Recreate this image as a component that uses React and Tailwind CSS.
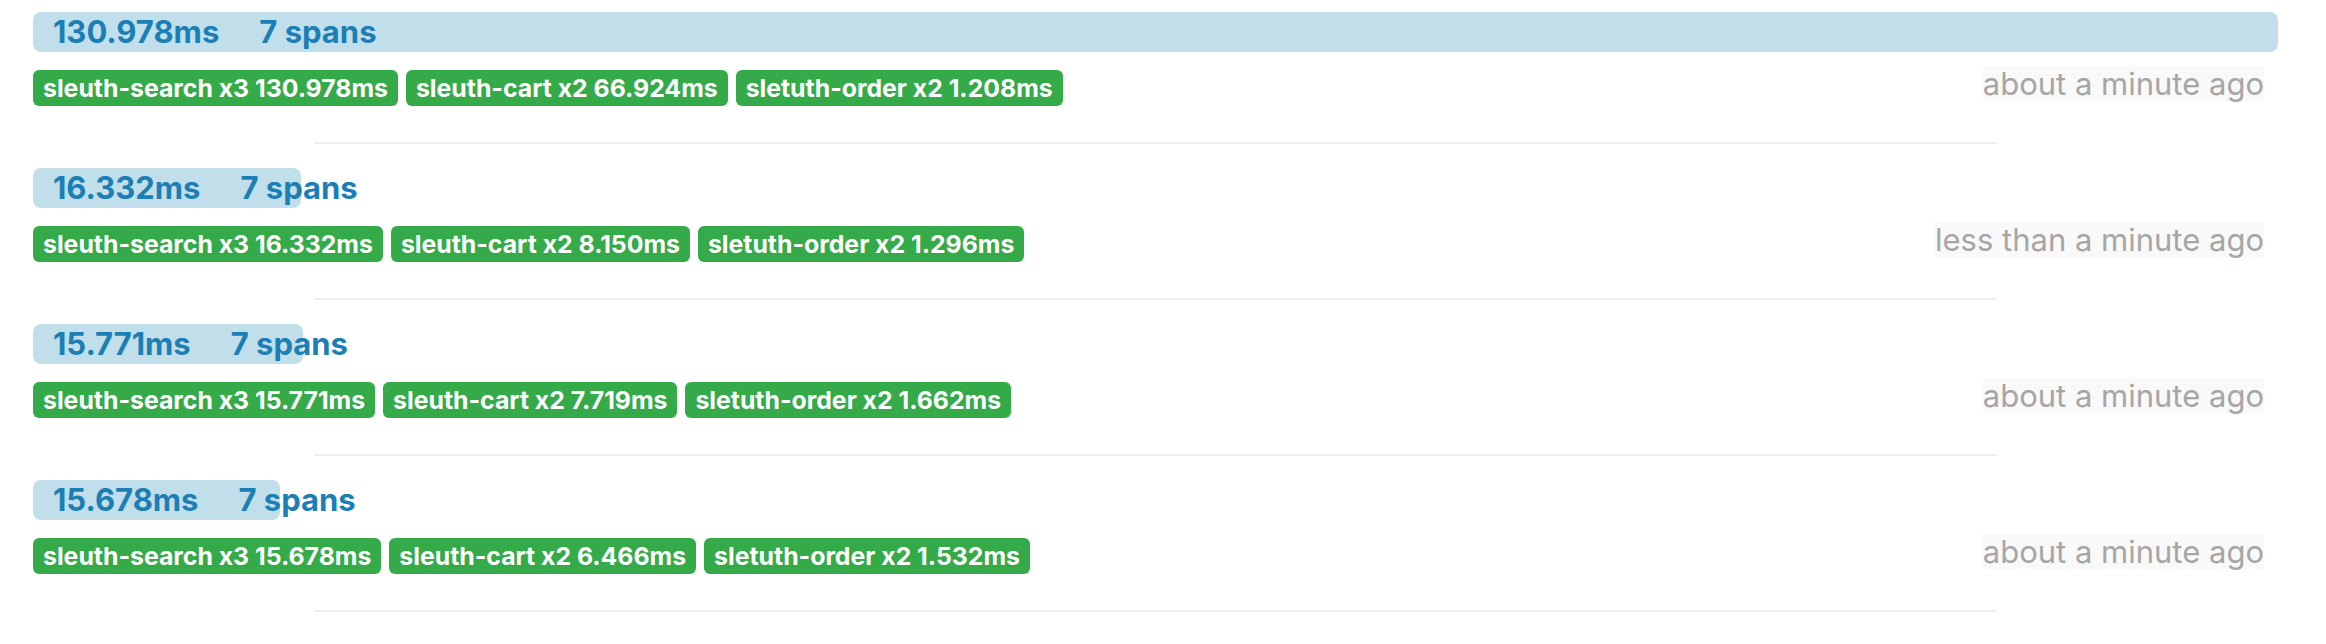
import React from 'react';

const traces = [
  {
    duration: '130.978ms',
    spans: 7,
    width: 100,
    services: ['sleuth-search x3 130.978ms', 'sleuth-cart x2 66.924ms', 'sletuth-order x2 1.208ms'],
    when: 'about a minute ago'
  },
  {
    duration: '16.332ms',
    spans: 7,
    width: 11.94,
    services: ['sleuth-search x3 16.332ms', 'sleuth-cart x2 8.150ms', 'sletuth-order x2 1.296ms'],
    when: 'less than a minute ago'
  },
  {
    duration: '15.771ms',
    spans: 7,
    width: 12.03,
    services: ['sleuth-search x3 15.771ms', 'sleuth-cart x2 7.719ms', 'sletuth-order x2 1.662ms'],
    when: 'about a minute ago'
  },
  {
    duration: '15.678ms',
    spans: 7,
    width: 11.0,
    services: ['sleuth-search x3 15.678ms', 'sleuth-cart x2 6.466ms', 'sletuth-order x2 1.532ms'],
    when: 'about a minute ago'
  }
];

const TraceRow = ({ trace }) => {
  return (
    <div className="pt-[12px] pb-[12px]">
      {/* duration bar, text runs past it */}
      <div
        className="h-[40px] rounded-[8px] bg-[#c1deeb] pl-[20px] whitespace-nowrap text-[31px] leading-[40px] font-bold text-[#1b7fb6]"
        style={{ width: `${trace.width}%` }}
      >
        <span>{trace.duration}</span>
        <span className="ml-[40px]">{trace.spans} spans</span>
      </div>

      <div className="mt-[14px] flex items-start justify-between">
        <div className="mt-[4px] flex gap-[8px]">
          {trace.services.map((s) => (
            <span
              key={s}
              className="h-[36px] rounded-[6px] bg-[#34aa48] px-[10px] text-[24.8px] leading-[36px] font-bold text-white whitespace-nowrap"
            >
              {s}
            </span>
          ))}
        </div>
        <span className="mr-[14px] h-[35px] bg-[#f9f9f9] text-[31px] leading-[35px] text-[#a6a6a6] whitespace-nowrap">
          {trace.when}
        </span>
      </div>

      <div className="mx-auto mt-[36px] h-[2px] w-3/4 bg-[#ededed]" />
    </div>
  );
};

const App = () => {
  return (
    <div className="min-h-screen bg-white pl-[33px] pr-[48px] font-['Inter',sans-serif]">
      {traces.map((t) => (
        <TraceRow key={t.duration} trace={t} />
      ))}
    </div>
  );
};

export default App;
